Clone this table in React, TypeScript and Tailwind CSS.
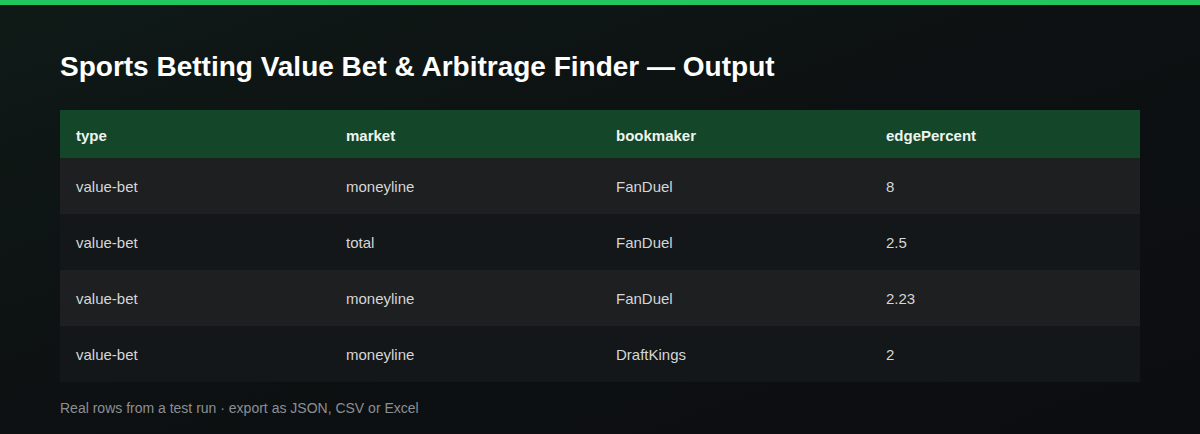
const rows = [
  { type: "value-bet", market: "moneyline", bookmaker: "FanDuel", edge: "8" },
  { type: "value-bet", market: "total", bookmaker: "FanDuel", edge: "2.5" },
  { type: "value-bet", market: "moneyline", bookmaker: "FanDuel", edge: "2.23" },
  { type: "value-bet", market: "moneyline", bookmaker: "DraftKings", edge: "2" },
];

export default function App() {
  return (
    <div className="h-[434px] w-[1200px] overflow-hidden bg-[linear-gradient(160deg,#0f1a17_0%,#0d1112_45%,#0c0d11_100%)] font-['Liberation_Sans',Arial,sans-serif] text-white">
      <div className="h-[5px] bg-[#22c55e]" />
      <div className="px-[60px] pt-[46px]">
        <h1 className="text-[28px] font-bold leading-[32px]">
          Sports Betting Value Bet &amp; Arbitrage Finder — Output
        </h1>
        <table className="mt-[27px] w-full table-fixed border-collapse text-left text-[15px]">
          <thead>
            <tr className="h-[48px] bg-[#14472a]">
              <th className="px-4 pt-[4px] font-bold text-[#eef5ef]">type</th>
              <th className="px-4 pt-[4px] font-bold text-[#eef5ef]">market</th>
              <th className="px-4 pt-[4px] font-bold text-[#eef5ef]">bookmaker</th>
              <th className="px-4 pt-[4px] font-bold text-[#eef5ef]">edgePercent</th>
            </tr>
          </thead>
          <tbody>
            {rows.map((r, i) => (
              <tr
                key={i}
                className={i % 2 === 0 ? "h-[56px] bg-[#1d1f20]" : "h-[56px] bg-[#141719]"}
              >
                <td className="px-4 pt-[2px] text-[#d4d6d8]">{r.type}</td>
                <td className="px-4 pt-[2px] text-[#d4d6d8]">{r.market}</td>
                <td className="px-4 pt-[2px] text-[#d4d6d8]">{r.bookmaker}</td>
                <td className="px-4 pt-[2px] text-[#d4d6d8]">{r.edge}</td>
              </tr>
            ))}
          </tbody>
        </table>
        <p className="mt-[16px] text-[14px] text-[#8b8f93]">
          Real rows from a test run · export as JSON, CSV or Excel
        </p>
      </div>
    </div>
  );
}
